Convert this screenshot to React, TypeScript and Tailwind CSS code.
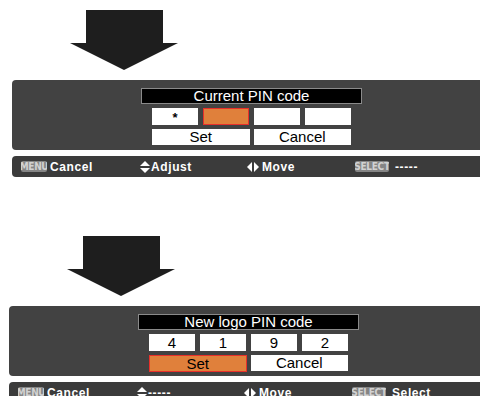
import React from 'react';

const font = { fontFamily: '"Liberation Sans", Arial, sans-serif' };

function DownArrow() {
  return (
    <svg width="108" height="60" viewBox="0 0 108 60">
      <rect x="16" y="0" width="77" height="34" fill="#1e1e1e" />
      <polygon points="0,33 108,33 54,60" fill="#1e1e1e" />
    </svg>
  );
}

function Badge({ label, w }: { label: string; w: string }) {
  return (
    <span
      className={`${w} h-[11px] flex items-center justify-center rounded-[2px] bg-[#858585] text-[#d2d2d2] text-[10px] font-bold leading-none tracking-[-0.3px] overflow-hidden`}
      style={{ fontFamily: '"Liberation Sans Narrow", "DejaVu Sans Condensed", sans-serif' }}
    >
      {label}
    </span>
  );
}

function UpDown() {
  return (
    <svg width="10" height="12" viewBox="0 0 10 12">
      <polygon points="5,0 10,5 0,5" fill="#fff" />
      <polygon points="0,7 10,7 5,12" fill="#fff" />
    </svg>
  );
}

function LeftRight() {
  return (
    <svg width="12" height="10" viewBox="0 0 12 10">
      <polygon points="0,5 5,0 5,10" fill="#fff" />
      <polygon points="7,0 12,5 7,10" fill="#fff" />
    </svg>
  );
}

interface ScreenProps {
  title: string;
  digits: string[];
  activeDigit: number | null;
  setActive: boolean;
  adjust: string;
  select: string;
  shift: string;
}

function Screen({ title, digits, activeDigit, setActive, adjust, select, shift }: ScreenProps) {
  return (
    <div className={shift}>
      {/* arrow */}
      <div className="h-[80px] pt-[10px] pl-[70px]">
        <DownArrow />
      </div>

      {/* PIN panel */}
      <div className="ml-[12px] h-[70px] bg-[#424242] rounded-l-[4px] pl-[129px] pt-[8px]" style={font}>
        <div className="w-[221px]">
          <div className="h-[16px] bg-black border border-[#8a8a8a] text-white text-[15px] leading-[14px] text-center">
            {title}
          </div>
          <div className="mx-[11px] mt-[4px] grid grid-cols-4 gap-[5px]">
            {digits.map((d, i) => (
              <div
                key={i}
                className={
                  i === activeDigit
                    ? 'h-[17px] bg-[#e0803b] border border-[#e8302a]'
                    : 'h-[17px] bg-white text-black text-[15px] leading-[17px] text-center'
                }
              >
                {d === '*' ? <span className="text-[13px] font-bold">*</span> : d}
              </div>
            ))}
          </div>
          <div className="mx-[11px] mt-[4px] grid grid-cols-2 gap-[4px]">
            <div
              className={
                setActive
                  ? 'h-[17px] bg-[#e0803b] border border-[#e8302a] text-black text-[15px] leading-[15px] text-center'
                  : 'h-[16px] bg-white text-black text-[15px] leading-[16px] text-center'
              }
            >
              Set
            </div>
            <div className="h-[16px] bg-white text-black text-[15px] leading-[16px] text-center">Cancel</div>
          </div>
        </div>
      </div>

      {/* guide bar */}
      <div
        className="ml-[12px] mt-[6px] h-[21px] bg-[#3b3b3b] rounded-l-[4px] pl-[9px] flex items-center text-white text-[12px] font-bold tracking-[0.6px]"
        style={font}
      >
        <div className="w-[119px] flex items-center gap-[3px]">
          <Badge label="MENU" w="w-[26px]" />
          <span>Cancel</span>
        </div>
        <div className="w-[107px] flex items-center gap-[1px]">
          <UpDown />
          <span>{adjust}</span>
        </div>
        <div className="w-[108px] flex items-center gap-[3px]">
          <LeftRight />
          <span>Move</span>
        </div>
        <div className="flex items-center gap-[6px]">
          <Badge label="SELECT" w="w-[34px]" />
          <span>{select}</span>
        </div>
      </div>
    </div>
  );
}

export default function App() {
  return (
    <div className="w-[480px] h-[396px] bg-white overflow-hidden">
      <Screen
        title="Current PIN code"
        digits={['*', '', '', '']}
        activeDigit={1}
        setActive={false}
        adjust="Adjust"
        select="-----"
        shift=""
      />
      <div className="h-[49px]" />
      <Screen
        title="New logo PIN code"
        digits={['4', '1', '9', '2']}
        activeDigit={null}
        setActive={true}
        adjust="-----"
        select="Select"
        shift="-ml-[3px]"
      />
    </div>
  );
}
